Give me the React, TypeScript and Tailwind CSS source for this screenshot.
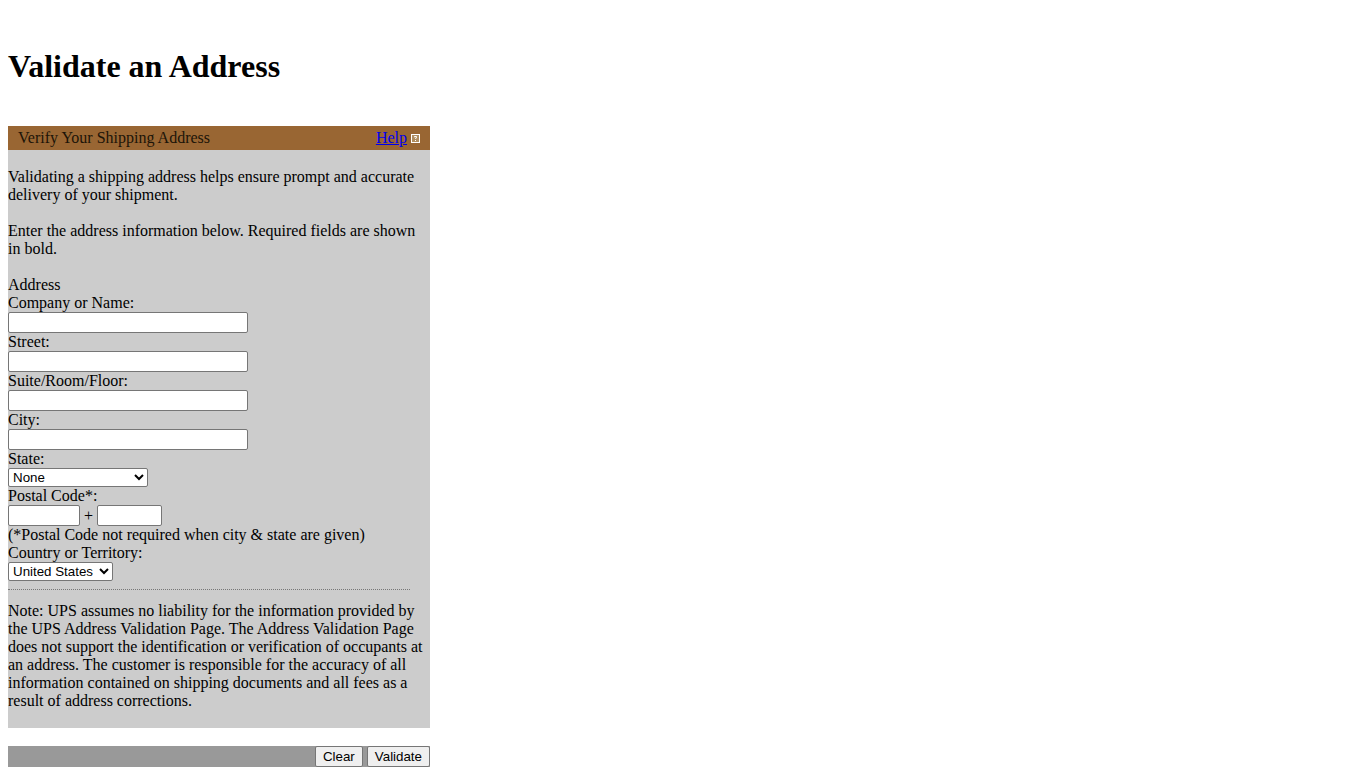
import React from "react";

const serif = "font-['Liberation_Serif','Times_New_Roman',serif]";
const inputBox =
  "block h-[21px] bg-white border border-[#767676] rounded-[2px] outline-none";
const selectBox =
  "block h-[19px] bg-white border border-[#767676] rounded-[2px] text-[13.33px] font-['Liberation_Sans',Arial,sans-serif] text-black";
const button =
  "h-[21px] px-[7px] bg-[#efefef] border border-[#767676] rounded-[2px] text-[13.33px] leading-none font-['Liberation_Sans',Arial,sans-serif] text-black";

function HelpIcon() {
  return (
    <svg width="9" height="9" viewBox="0 0 9 9" className="block mt-px" aria-hidden="true">
      <rect x="0.5" y="0.5" width="8" height="8" fill="#b08d5f" stroke="#ffffff" strokeWidth="1" />
      <path d="M3 3 H3.5 V2.5 H5.5 V3.5 H5 V4.5 H4.5 V5" fill="none" stroke="#ffffff" strokeWidth="1" />
      <rect x="4" y="6" width="1" height="1" fill="#ffffff" />
    </svg>
  );
}

function TextField({ label }: { label: string }) {
  return (
    <>
      <label className="block">{label}</label>
      <input type="text" className={`${inputBox} w-[240px]`} />
    </>
  );
}

export default function App() {
  return (
    <div className={`${serif} text-[16px] leading-[18px] text-black bg-white px-2 pt-12 h-[768px] overflow-hidden`}>
      <h1 className="text-[32px] leading-[37px] font-bold">Validate an Address</h1>

      <div className="w-[422px] mt-[41px]">
        <div className="h-6 bg-[#996633] flex items-center justify-between px-[10px]">
          <span className="text-[#1c1408]">Verify Your Shipping Address</span>
          <span className="flex items-center gap-1">
            <a href="#" className="text-[#0000ee] underline">Help</a>
            <HelpIcon />
          </span>
        </div>

        <div className="bg-[#cccccc] py-[18px]">
          <p className="pr-2">Validating a shipping address helps ensure prompt and accurate delivery of your shipment.</p>
          <p className="mt-[18px] pr-2">Enter the address information below. Required fields are shown in bold.</p>

          <div className="mt-[18px]">Address</div>
          <TextField label="Company or Name:" />
          <TextField label="Street:" />
          <TextField label="Suite/Room/Floor:" />
          <TextField label="City:" />

          <label className="block">State:</label>
          <select className={`${selectBox} w-[140px]`} defaultValue="None">
            <option>None</option>
          </select>

          <label className="block">Postal Code*:</label>
          <div className="flex items-center h-[21px]">
            <input type="text" className={`${inputBox} w-[72px]`} />
            <span className="w-[17px] text-center">+</span>
            <input type="text" className={`${inputBox} w-[65px]`} />
          </div>
          <div>(*Postal Code not required when city &amp; state are given)</div>

          <label className="block">Country or Territory:</label>
          <select className={`${selectBox} w-[105px]`} defaultValue="United States">
            <option>United States</option>
          </select>

          <div className="w-[402px] mt-2 border-t border-dotted border-[#777777]" />

          <p className="mt-3 pr-[4px]">
            Note: UPS assumes no liability for the information provided by the UPS Address Validation Page. The Address Validation Page does not support the identification or verification of occupants at an address. The customer is responsible for the accuracy of all information contained on shipping documents and all fees as a result of address corrections.
          </p>
        </div>

        <div className="mt-[18px] h-[21px] bg-[#999999] flex justify-end gap-1">
          <button type="button" className={button}>Clear</button>
          <button type="button" className={button}>Validate</button>
        </div>
      </div>
    </div>
  );
}
